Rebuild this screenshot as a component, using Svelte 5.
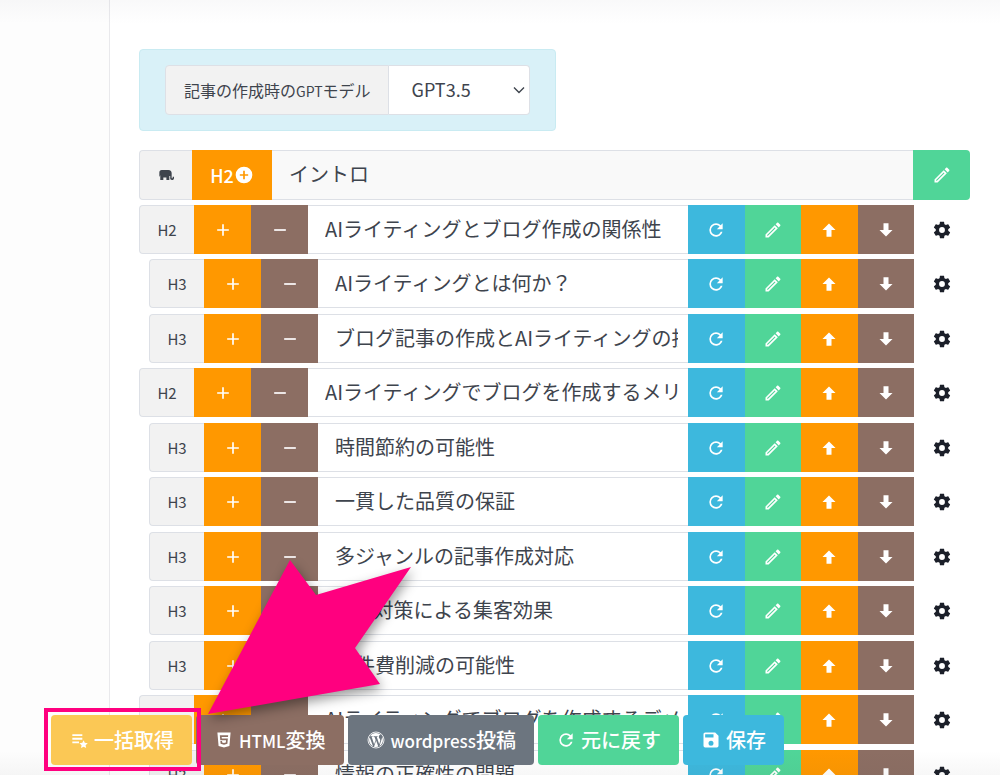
<script>
  const icons = {
    plus: 'M19,13H13V19H11V13H5V11H11V5H13V11H19V13Z',
    minus: 'M19,13H5V11H19V13Z',
    refresh:
      'M17.65,6.35C16.2,4.9 14.21,4 12,4A8,8 0 0,0 4,12A8,8 0 0,0 12,20C15.73,20 18.84,17.45 19.73,14H17.65C16.83,16.33 14.61,18 12,18A6,6 0 0,1 6,12A6,6 0 0,1 12,6C13.66,6 15.14,6.69 16.22,7.78L13,11H20V4L17.65,6.35Z',
    pencil:
      'M14.06,9L15,9.94L5.92,19H5V18.08L14.06,9M17.66,3C17.41,3 17.15,3.1 16.96,3.29L15.13,5.12L18.88,8.87L20.71,7.04C21.1,6.65 21.1,6 20.71,5.63L18.37,3.29C18.17,3.09 17.92,3 17.66,3M14.06,6.19L3,17.25V21H6.75L17.81,9.94L14.06,6.19Z',
    up: 'M15,20H9V12H4.16L12,4.16L19.84,12H15V20Z',
    down: 'M9,4H15V12H19.84L12,19.84L4.16,12H9V4Z',
    cog: 'M12,15.5A3.5,3.5 0 0,1 8.5,12A3.5,3.5 0 0,1 12,8.5A3.5,3.5 0 0,1 15.5,12A3.5,3.5 0 0,1 12,15.5M19.43,12.97C19.47,12.65 19.5,12.33 19.5,12C19.5,11.67 19.47,11.34 19.43,11L21.54,9.37C21.73,9.22 21.78,8.95 21.66,8.73L19.66,5.27C19.54,5.05 19.27,4.96 19.05,5.05L16.56,6.05C16.04,5.66 15.5,5.32 14.87,5.07L14.5,2.42C14.46,2.18 14.25,2 14,2H10C9.75,2 9.54,2.18 9.5,2.42L9.13,5.07C8.5,5.32 7.96,5.66 7.44,6.05L4.95,5.05C4.73,4.96 4.46,5.05 4.34,5.27L2.34,8.73C2.21,8.95 2.27,9.22 2.46,9.37L4.57,11C4.53,11.34 4.5,11.67 4.5,12C4.5,12.33 4.53,12.65 4.57,12.97L2.46,14.63C2.27,14.78 2.21,15.05 2.34,15.27L4.34,18.73C4.46,18.95 4.73,19.03 4.95,18.95L7.44,17.94C7.96,18.34 8.5,18.68 9.13,18.93L9.5,21.58C9.54,21.82 9.75,22 10,22H14C14.25,22 14.46,21.82 14.5,21.58L14.87,18.93C15.5,18.67 16.04,18.34 16.56,17.94L19.05,18.95C19.27,19.03 19.54,18.95 19.66,18.73L21.66,15.27C21.78,15.05 21.73,14.78 21.54,14.63L19.43,12.97Z',
    save: 'M15,9H5V5H15M12,19A3,3 0 0,1 9,16A3,3 0 0,1 12,13A3,3 0 0,1 15,16A3,3 0 0,1 12,19M17,3H5C3.89,3 3,3.9 3,5V19A2,2 0 0,0 5,21H19A2,2 0 0,0 21,19V7L17,3Z',
    plusCircle:
      'M17,13H13V17H11V13H7V11H11V7H13V11H17M12,2A10,10 0 0,0 2,12A10,10 0 0,0 12,22A10,10 0 0,0 22,12A10,10 0 0,0 12,2Z',
    html5:
      'M12,17.56L16.07,16.43L16.62,10.33H9.38L9.2,8.3H16.8L17,6.31H7L7.56,12.32H14.45L14.22,14.9L12,15.5L9.78,14.9L9.64,13.24H7.64L7.93,16.43L12,17.56M4.07,3H19.93L18.5,19.2L12,21L5.5,19.2L4.07,3Z',
    wordpress:
      'M12.2,12.9L9.2,21.6C10.1,21.9 11,22 12,22C13.2,22 14.3,21.8 15.3,21.4L12.2,12.9M20.8,7.2C20.9,8.4 20.6,9.6 20.1,11L17,20.6C20,18.9 22,15.7 22,12C22,10.3 21.6,8.6 20.8,7.2M2.9,7.9C2.3,9.2 2,10.5 2,12C2,15.9 4.3,19.4 7.7,21L2.9,7.9M3.6,6.6C5.4,3.8 8.5,2 12,2C14.6,2 17,3 18.8,4.6C17.2,4.5 16.1,5.8 16.1,7.2C16.1,8.5 16.9,9.5 17.6,10.7C18.4,12.1 18.1,13.4 17.6,15L16.6,18.2L13.1,7.7L14.3,7.6V6.7H8.6V7.6L9.9,7.7L11.5,12L9.3,18.2L5.8,7.7L7,7.6V6.7H3.6Z',
    playlist:
      'M4,5H16V7.2H4V5M4,9.4H16V11.6H4V9.4M4,13.8H12V16H4V13.8M17.5,12.2L19,15.4L22.5,15.8L19.9,18.2L20.6,21.7L17.5,20L14.4,21.7L15.1,18.2L12.5,15.8L16,15.4L17.5,12.2Z',
    elephant:
      'M5.5,4.5H15.5C19,4.5 20.5,6.5 20.5,9.5V16C20.5,17 22,17 22,16V14.5H24V16.5C24,18.6 22.9,19.6 21,19.6C19.3,19.6 18.3,18.6 18.3,17V13.6H17V19.6H12.6V15.6H8V19.6H3.4V12.4L2,15V8.5C2,6 3.3,4.5 5.5,4.5Z',
  };

  let model = $state('GPT3.5');
  let intro = $state('イントロ');
  let headings = $state([
    { level: 'H2', text: 'AIライティングとブログ作成の関係性' },
    { level: 'H3', text: 'AIライティングとは何か？' },
    { level: 'H3', text: 'ブログ記事の作成とAIライティングの接点' },
    { level: 'H2', text: 'AIライティングでブログを作成するメリット' },
    { level: 'H3', text: '時間節約の可能性' },
    { level: 'H3', text: '一貫した品質の保証' },
    { level: 'H3', text: '多ジャンルの記事作成対応' },
    { level: 'H3', text: 'SEO対策による集客効果' },
    { level: 'H3', text: '人件費削減の可能性' },
    { level: 'H2', text: 'AIライティングでブログを作成するデメリット' },
    { level: 'H3', text: '情報の正確性の問題' },
  ]);
</script>

{#snippet icon(name)}
  <svg class="icon" viewBox="0 0 24 24" aria-hidden="true"><path fill-rule="evenodd" d={icons[name]} /></svg>
{/snippet}

<div class="page">
  <aside class="side"></aside>
  <main>
    <div class="model">
      <label for="model">記事の作成時の<span>GPT</span>モデル</label>
      <div class="select">
        <select id="model" bind:value={model}>
          <option>GPT3.5</option>
          <option>GPT4</option>
        </select>
        <svg class="chevron" viewBox="0 0 12 8" aria-hidden="true"><path d="M1 1.5 6 6.5 11 1.5" /></svg>
      </div>
    </div>

    <div class="row intro">
      <span class="tag">{@render icon('elephant')}</span>
      <button class="orange add">H2{@render icon('plusCircle')}</button>
      <input aria-label="イントロ" bind:value={intro} />
      <button class="green end" aria-label="編集">{@render icon('pencil')}</button>
    </div>

    <ul>
      {#each headings as heading, i}
        <li class:sub={heading.level === 'H3'}>
          <div class="row">
            <label class="tag" for="heading-{i}">{heading.level}</label>
            <button class="orange" aria-label="追加">{@render icon('plus')}</button>
            <button class="brown" aria-label="削除">{@render icon('minus')}</button>
            <input id="heading-{i}" bind:value={heading.text} />
            <div class="actions">
              <button class="blue" aria-label="更新">{@render icon('refresh')}</button>
              <button class="green" aria-label="編集">{@render icon('pencil')}</button>
              <button class="orange" aria-label="上へ">{@render icon('up')}</button>
              <button class="brown" aria-label="下へ">{@render icon('down')}</button>
            </div>
          </div>
          <button class="gear" aria-label="設定">{@render icon('cog')}</button>
        </li>
      {/each}
    </ul>
  </main>

  <div class="topshade"></div>
  <div class="bottomshade"></div>

  <footer>
    <div class="marked">
      <button class="yellow">{@render icon('playlist')}一括取得</button>
    </div>
    <button class="brown">{@render icon('html5')}<b><span>HTML</span>変換</b></button>
    <button class="gray">
      <svg class="icon" viewBox="0 0 24 24" aria-hidden="true">
        <circle class="ring" cx="12" cy="12" r="9.6" />
        <path transform="translate(2 2) scale(.8333)" d={icons.wordpress} />
      </svg>
      <b><span>wordpress</span>投稿</b>
    </button>
    <button class="green">{@render icon('refresh')}元に戻す</button>
    <button class="blue">{@render icon('save')}保存</button>
  </footer>

  <svg class="arrow" viewBox="0 0 203 154" aria-hidden="true">
    <path d="M82 0 108 35 203 7 147 88 172 124 0 154Z" />
  </svg>
</div>

<style>
  :global(body) {
    margin: 0;
    background: #fff;
  }
  .page {
    position: relative;
    display: flex;
    height: 100vh;
    overflow: hidden;
    font: 400 20px/28px 'Noto Sans CJK JP', sans-serif;
    color: #3e444d;
  }
  .side {
    box-sizing: border-box;
    flex: none;
    width: 110px;
    background: #fdfdfd;
    border-right: 1px solid #e9e9ec;
  }
  main {
    flex: 1;
    min-width: 0;
    padding: 49px 30px 0 29px;
  }
  button,
  input,
  select {
    box-sizing: border-box;
    margin: 0;
    padding: 0;
    border: 0;
    border-radius: 0;
    font: inherit;
    color: inherit;
    background: none;
  }
  button {
    display: flex;
    align-items: center;
    justify-content: center;
    color: #fff;
    cursor: pointer;
  }
  .icon {
    flex: none;
    width: 20px;
    height: 20px;
    fill: currentColor;
  }
  .ring {
    fill: none;
    stroke: currentColor;
    stroke-width: 1;
  }
  .orange {
    background: #ff9800;
  }
  .brown {
    background: #8c6e63;
  }
  .green {
    background: #50d598;
  }
  .blue {
    background: #3db8dd;
  }
  .gray {
    background: #6c757f;
  }
  .yellow {
    background: #fbc855;
  }

  .model {
    box-sizing: border-box;
    display: flex;
    width: fit-content;
    margin-bottom: 19px;
    padding: 15px 25px;
    background: #d9f1f8;
    border: 1px solid #c9ebf2;
    border-radius: 4px;
  }
  .model label {
    padding: 10px 17px 10px 18px;
    font-size: 16px;
    background: #f2f2f2;
    border: 1px solid #dde0e6;
    border-radius: 4px 0 0 4px;
  }
  .model label span {
    font-size: 14px;
    line-height: 1;
  }
  .select {
    position: relative;
    display: flex;
    background: #fff;
    border: 1px solid #dde0e6;
    border-left: 0;
    border-radius: 0 4px 4px 0;
  }
  .select select {
    width: 140px;
    padding: 0 23px 2px;
    font-size: 18px;
    appearance: none;
    outline: 0;
  }
  .chevron {
    position: absolute;
    top: 20px;
    right: 4px;
    width: 12px;
    height: 8px;
    fill: none;
    stroke: #3e444d;
    stroke-width: 1.4;
    pointer-events: none;
  }

  .row {
    display: flex;
    flex: 1;
    min-width: 0;
    height: 49px;
  }
  .row > button {
    flex: none;
    width: 57px;
  }
  .tag {
    box-sizing: border-box;
    display: flex;
    flex: none;
    align-items: center;
    justify-content: center;
    width: 55px;
    font-size: 15px;
    background: #f2f2f2;
    border: 1px solid #dde0e6;
    border-right: 0;
    border-radius: 4px 0 0 4px;
  }
  .tag .icon {
    width: 16px;
    height: 16px;
  }
  .row input {
    flex: 1;
    min-width: 0;
    padding: 0 10px 2px 17px;
    background: #fff;
    border: 1px solid #dde0e6;
    border-width: 1px 0;
    outline: 0;
  }
  .intro {
    height: 50px;
  }
  .intro .tag {
    width: 53px;
  }
  .intro .add {
    width: 80px;
    font-size: 18px;
    font-weight: 500;
  }
  .intro input {
    background: #f9f9f9;
  }
  .intro .end {
    border-radius: 0 4px 4px 0;
  }

  ul {
    margin: 0;
    padding: 0;
    list-style: none;
  }
  li {
    display: flex;
    margin-top: 6px;
  }
  li:first-child,
  li:nth-child(even) {
    margin-top: 5px;
  }
  li.sub {
    padding-left: 10px;
  }
  .actions {
    display: grid;
    grid-template-columns: repeat(4, 1fr);
    flex: none;
    width: 226px;
  }
  .gear {
    flex: none;
    width: 56px;
    color: #1b1f29;
  }

  .topshade,
  .bottomshade {
    position: absolute;
    left: 0;
    right: 0;
    pointer-events: none;
  }
  .topshade {
    top: 0;
    height: 24px;
    background: linear-gradient(rgba(60, 60, 90, 0.03), transparent);
  }
  .bottomshade {
    bottom: 0;
    height: 24px;
    background: linear-gradient(transparent, rgba(60, 60, 60, 0.04));
  }

  footer {
    position: absolute;
    left: 51px;
    bottom: 10px;
    display: flex;
    gap: 4px;
  }
  footer button {
    gap: 5px;
    height: 50px;
    padding: 0 18px;
    font-weight: 500;
    white-space: nowrap;
    border-radius: 4px;
  }
  footer b {
    font-weight: 500;
  }
  footer span {
    font-size: 17px;
    line-height: 1;
  }
  .marked {
    position: relative;
    z-index: 1;
  }
  .marked::after {
    content: '';
    position: absolute;
    inset: -7px -9px -6px -7px;
    border: 4px solid #ff007f;
    pointer-events: none;
  }
  .arrow {
    position: absolute;
    left: 208px;
    bottom: 61px;
    width: 203px;
    height: 154px;
    overflow: visible;
    fill: #ff007f;
    filter: drop-shadow(2px 5px 6px rgba(0, 0, 0, 0.4));
    pointer-events: none;
  }
</style>
